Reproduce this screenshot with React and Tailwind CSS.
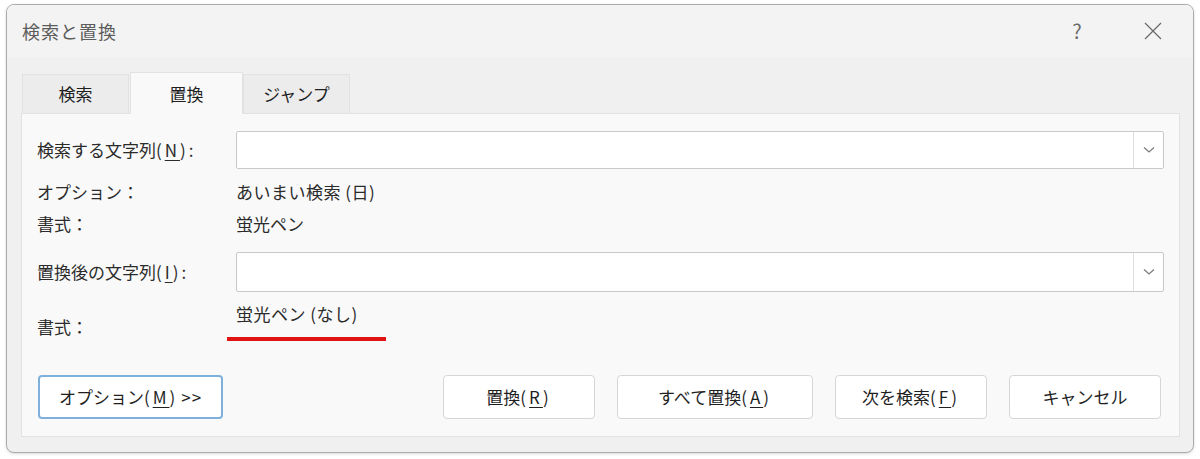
import { useState } from "react";

const FONT = { fontFamily: '"Noto Sans CJK JP", "Noto Sans", sans-serif' };

// mnemonic like "(N)" with the wider spacing the dialog font has
function Key({ k, after = "" }) {
  return (
    <span className="tracking-[3px]">
      (<span className="underline underline-offset-[3px] decoration-1">{k}</span>){after}
    </span>
  );
}

function ComboInput() {
  return (
    <div className="flex h-full flex-1 border border-[#c9c9c9] bg-white rounded-[2px]">
      <div className="flex-1" />
      <div className="w-[30px] border-l border-[#dedede] flex items-center justify-center">
        <svg width="12" height="8" viewBox="0 0 12 8" fill="none">
          <path d="M1 1.5 L6 6 L11 1.5" stroke="#7a7a7a" strokeWidth="1.2" />
        </svg>
      </div>
    </div>
  );
}

function Button({ children, width, focused }) {
  return (
    <button
      className={
        "h-[44px] rounded-[4px] bg-white text-[17px] text-[#1f1f1f] flex items-center justify-center " +
        (focused ? "border-2 border-[#7fb0dc]" : "border border-[#d6d6d6]")
      }
      style={{ width }}
    >
      {children}
    </button>
  );
}

export default function App() {
  const [tab] = useState("replace");
  const tabs = [
    { id: "find", label: "検索" },
    { id: "replace", label: "置換" },
    { id: "jump", label: "ジャンプ" },
  ];

  return (
    <div className="w-[1200px] h-[459px] bg-white pt-[4px] pl-[6px]" style={FONT}>
      <div className="w-[1188px] h-[449px] flex flex-col overflow-hidden rounded-[8px] border border-[#ababab] bg-[#f0f0f0] shadow-[0_1px_3px_rgba(0,0,0,0.15)]">
        {/* title bar */}
        <div className="h-[52px] bg-[#f3f3f3] flex items-center pl-[15px] pr-[30px]">
          <div className="text-[18px] text-[#5c5c5c] tracking-[1px]">検索と置換</div>
          <div className="ml-auto text-[20px] text-[#6a6a6a] w-[20px] text-center">?</div>
          <div className="ml-[56px] w-[20px] flex items-center justify-center">
            <svg width="18" height="18" viewBox="0 0 18 18">
              <path d="M1 1 L17 17 M17 1 L1 17" stroke="#6a6a6a" strokeWidth="1.2" />
            </svg>
          </div>
        </div>

        {/* tabs */}
        <div className="pl-[15px] pt-[15px] flex items-end">
          {tabs.map((t) =>
            t.id === tab ? (
              <div
                key={t.id}
                className="relative z-10 -mb-px w-[113px] h-[42px] bg-[#f9f9f9] border border-b-0 border-[#e2e2e2] flex items-center justify-center text-[17px] text-[#1f1f1f]"
              >
                {t.label}
              </div>
            ) : (
              <div
                key={t.id}
                className={
                  "w-[107px] h-[39px] bg-[#ececec] border border-b-0 border-[#e2e2e2] flex items-center justify-center text-[17px] text-[#1f1f1f] " +
                  (t.id === "find" ? "mr-[1px]" : "")
                }
              >
                {t.label}
              </div>
            )
          )}
        </div>

        {/* panel */}
        <div className="ml-[14px] mr-[13px] h-[324px] bg-[#f9f9f9] border border-[#e2e2e2] flex flex-col pl-[15px] pr-[15px] pt-[17px] pb-[17px] text-[17px] text-[#2b2b2b]">
          <div className="flex h-[38px] items-center">
            <div className="w-[199px]">
              検索する文字列<Key k="N" after=":" />
            </div>
            <ComboInput />
          </div>
          <div className="flex h-[32px] mt-[7px] items-center">
            <div className="w-[199px]">オプション：</div>
            <div className="tracking-[0.5px]">あいまい検索 (日)</div>
          </div>
          <div className="flex h-[32px] items-center">
            <div className="w-[199px]">書式：</div>
            <div>蛍光ペン</div>
          </div>
          <div className="flex h-[40px] mt-[12px] items-center">
            <div className="w-[199px]">
              置換後の文字列<Key k="I" after=":" />
            </div>
            <ComboInput />
          </div>
          <div className="flex">
            <div className="w-[199px] pt-[23px] leading-[24px]">書式：</div>
            <div className="pt-[10px]">
              <div className="leading-[24px] tracking-[0.5px]">蛍光ペン (なし)</div>
              <div className="-ml-[9px] mt-[11px] w-[159px] h-[4px] bg-[#e11414]" />
            </div>
          </div>

          <div className="mt-auto flex items-center pl-[1px] pr-[3px]">
            <Button width={185} focused>
              オプション<Key k="M" />
              <span className="ml-[3px] tracking-[1px]">&gt;&gt;</span>
            </Button>
            <div className="ml-auto flex gap-[22px]">
              <Button width={152}>
                置換<Key k="R" />
              </Button>
              <Button width={196}>
                すべて置換<Key k="A" />
              </Button>
              <Button width={152}>
                次を検索<Key k="F" />
              </Button>
              <Button width={152}>キャンセル</Button>
            </div>
          </div>
        </div>
      </div>
    </div>
  );
}
